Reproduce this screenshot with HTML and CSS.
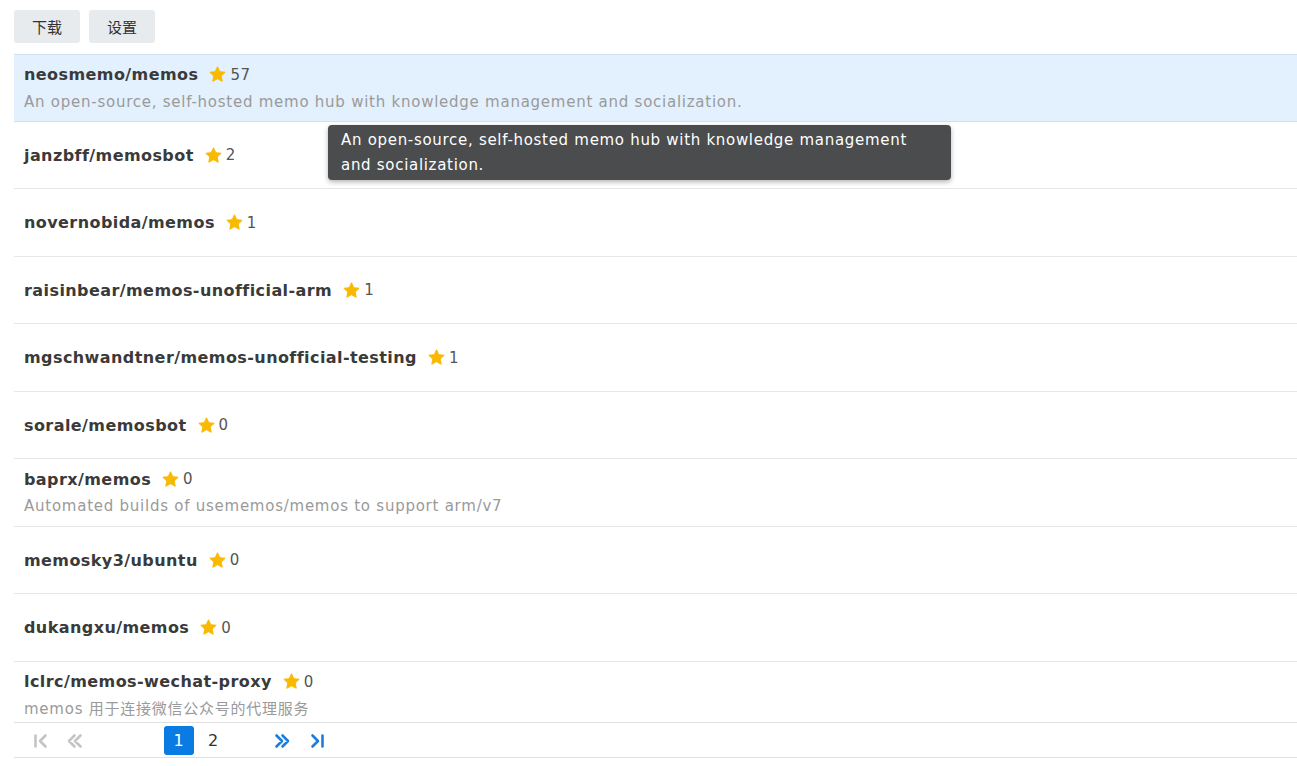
FILE: index.html
```html
<!DOCTYPE html>
<html lang="zh">
<head>
<meta charset="utf-8">
<title>memos</title>
<link rel="stylesheet" href="styles.css">
</head>
<body>
<div class="page">
  <div class="toolbar">
    <button class="btn">下载</button>
    <button class="btn">设置</button>
  </div>
  <div class="list">
    <div class="row selected">
      <div class="title"><span class="name">neosmemo/memos</span><svg class="star" viewBox="0 0 24 24"><path d="M12 2.2l2.9 6.2 6.8.8-5 4.7 1.3 6.7L12 17.3l-6 3.3 1.3-6.7-5-4.7 6.8-.8z"/></svg><span class="count">57</span></div>
      <div class="desc">An open-source, self-hosted memo hub with knowledge management and socialization.</div>
    </div>
    <div class="row">
      <div class="title"><span class="name">janzbff/memosbot</span><svg class="star" viewBox="0 0 24 24"><path d="M12 2.2l2.9 6.2 6.8.8-5 4.7 1.3 6.7L12 17.3l-6 3.3 1.3-6.7-5-4.7 6.8-.8z"/></svg><span class="count">2</span></div>
    </div>
    <div class="row">
      <div class="title"><span class="name">novernobida/memos</span><svg class="star" viewBox="0 0 24 24"><path d="M12 2.2l2.9 6.2 6.8.8-5 4.7 1.3 6.7L12 17.3l-6 3.3 1.3-6.7-5-4.7 6.8-.8z"/></svg><span class="count">1</span></div>
    </div>
    <div class="row">
      <div class="title"><span class="name">raisinbear/memos-unofficial-arm</span><svg class="star" viewBox="0 0 24 24"><path d="M12 2.2l2.9 6.2 6.8.8-5 4.7 1.3 6.7L12 17.3l-6 3.3 1.3-6.7-5-4.7 6.8-.8z"/></svg><span class="count">1</span></div>
    </div>
    <div class="row">
      <div class="title"><span class="name">mgschwandtner/memos-unofficial-testing</span><svg class="star" viewBox="0 0 24 24"><path d="M12 2.2l2.9 6.2 6.8.8-5 4.7 1.3 6.7L12 17.3l-6 3.3 1.3-6.7-5-4.7 6.8-.8z"/></svg><span class="count">1</span></div>
    </div>
    <div class="row">
      <div class="title"><span class="name">sorale/memosbot</span><svg class="star" viewBox="0 0 24 24"><path d="M12 2.2l2.9 6.2 6.8.8-5 4.7 1.3 6.7L12 17.3l-6 3.3 1.3-6.7-5-4.7 6.8-.8z"/></svg><span class="count">0</span></div>
    </div>
    <div class="row">
      <div class="title"><span class="name">baprx/memos</span><svg class="star" viewBox="0 0 24 24"><path d="M12 2.2l2.9 6.2 6.8.8-5 4.7 1.3 6.7L12 17.3l-6 3.3 1.3-6.7-5-4.7 6.8-.8z"/></svg><span class="count">0</span></div>
      <div class="desc">Automated builds of usememos/memos to support arm/v7</div>
    </div>
    <div class="row">
      <div class="title"><span class="name">memosky3/ubuntu</span><svg class="star" viewBox="0 0 24 24"><path d="M12 2.2l2.9 6.2 6.8.8-5 4.7 1.3 6.7L12 17.3l-6 3.3 1.3-6.7-5-4.7 6.8-.8z"/></svg><span class="count">0</span></div>
    </div>
    <div class="row">
      <div class="title"><span class="name">dukangxu/memos</span><svg class="star" viewBox="0 0 24 24"><path d="M12 2.2l2.9 6.2 6.8.8-5 4.7 1.3 6.7L12 17.3l-6 3.3 1.3-6.7-5-4.7 6.8-.8z"/></svg><span class="count">0</span></div>
    </div>
    <div class="row">
      <div class="title"><span class="name">lclrc/memos-wechat-proxy</span><svg class="star" viewBox="0 0 24 24"><path d="M12 2.2l2.9 6.2 6.8.8-5 4.7 1.3 6.7L12 17.3l-6 3.3 1.3-6.7-5-4.7 6.8-.8z"/></svg><span class="count">0</span></div>
      <div class="desc">memos 用于连接微信公众号的代理服务</div>
    </div>
  </div>
  <div class="pager">
    <span class="pg disabled"><svg viewBox="0 0 20 20"><path d="M4.5 4.5v11M14.5 4.5L9 10l5.5 5.5"/></svg></span>
    <span class="pg disabled"><svg viewBox="0 0 20 20"><path d="M9.5 4.5L4 10l5.5 5.5M15.5 4.5L10 10l5.5 5.5"/></svg></span>
    <span class="pg empty"></span>
    <span class="pg empty"></span>
    <span class="pg num current">1</span>
    <span class="pg num">2</span>
    <span class="pg empty"></span>
    <span class="pg active"><svg viewBox="0 0 20 20"><path d="M4.5 4.5L10 10l-5.5 5.5M10.5 4.5L16 10l-5.5 5.5"/></svg></span>
    <span class="pg active"><svg viewBox="0 0 20 20"><path d="M5.5 4.5L11 10l-5.5 5.5M15.5 4.5v11"/></svg></span>
  </div>
  <div class="tooltip">An open-source, self-hosted memo hub with knowledge management and socialization.</div>
</div>
</body>
</html>
```
FILE: styles.css
```css
html, body {
  margin: 0;
  padding: 0;
  background: #fff;
}
body {
  font-family: "DejaVu Sans", Verdana, "Noto Sans CJK SC", sans-serif;
  color: #333;
  overflow: hidden;
}
.page {
  position: relative;
  padding-left: 14px;
}
.toolbar {
  display: flex;
  gap: 9px;
  padding-top: 10px;
  height: 34px;
  margin-bottom: 10px;
}
.btn {
  font-family: "Noto Sans CJK SC", sans-serif;
  font-size: 15px;
  color: #333;
  background: #e8ebee;
  border: none;
  border-radius: 3px;
  width: 66px;
  height: 33px;
  padding: 0;
  margin: 0;
}
.list {
  height: 668px;
  overflow: hidden;
}
.row {
  box-sizing: border-box;
  height: 67.5px;
  border-bottom: 1px solid #e6e6e6;
  padding: 1px 10px 0 10px;
  display: flex;
  flex-direction: column;
  justify-content: center;
}
.row.selected {
  background: #e3f0fd;
  border-top: 1px solid #cfe0ee;
  border-bottom: 1px solid #cfe0ee;
}
.title {
  display: flex;
  align-items: center;
  height: 26px;
  white-space: nowrap;
}
.name {
  font-weight: bold;
  font-size: 16px;
  letter-spacing: 0.42px;
  color: #3a3a3a;
}
.star {
  width: 19px;
  height: 19px;
  fill: #f8b900;
  stroke: #f8b900;
  stroke-width: 1.2;
  stroke-linejoin: round;
  margin-left: 10px;
  margin-right: 3px;
}
.count {
  font-size: 15px;
  letter-spacing: 0.5px;
  color: #555;
}
.desc {
  font-size: 15px;
  letter-spacing: 0.75px;
  color: #9a9a9a;
  height: 26px;
  line-height: 26px;
  margin-top: 1px;
  white-space: nowrap;
}
.pager {
  box-sizing: border-box;
  height: 36px;
  border-top: 1px solid #e0e0e0;
  border-bottom: 1px solid #e0e0e0;
  display: flex;
  align-items: center;
  gap: 4.5px;
  padding-left: 11.5px;
  padding-top: 1px;
}
.pg {
  width: 30px;
  height: 29px;
  display: flex;
  align-items: center;
  justify-content: center;
  border-radius: 3px;
  font-size: 16px;
  color: #333;
}
.pg svg {
  width: 20px;
  height: 20px;
  fill: none;
  stroke-width: 2.6;
  stroke-linecap: round;
  stroke-linejoin: round;
}
.pg.disabled svg { stroke: #c4c4c4; }
.pg.active svg { stroke: #1b7fda; }
.pg.current {
  background: #0a7be2;
  color: #fff;
}
.tooltip {
  position: absolute;
  left: 328px;
  top: 125px;
  width: 623px;
  box-sizing: border-box;
  padding: 2.5px 30px 2.5px 13px;
  background: #4b4c4d;
  color: #fff;
  font-family: "DejaVu Sans", Tahoma, sans-serif;
  font-size: 15px;
  letter-spacing: 0.7px;
  line-height: 25px;
  border-radius: 4px;
  box-shadow: 0 2px 5px rgba(0,0,0,0.3);
}
```
